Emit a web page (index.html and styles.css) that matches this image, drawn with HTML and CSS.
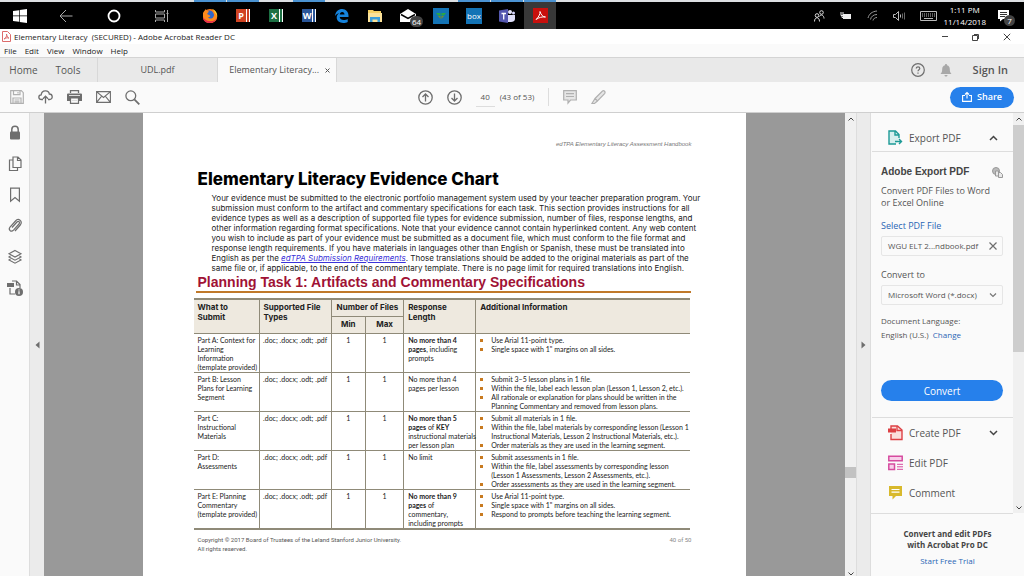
FILE: index.html
```html
<!DOCTYPE html>
<html lang="en">
<head>
<meta charset="utf-8">
<title>Elementary Literacy (SECURED) - Adobe Acrobat Reader DC</title>
<link rel="stylesheet" href="styles.css">
</head>
<body>
<header class="taskbar">
  <nav class="system" aria-label="System">
    <button class="sys start" aria-label="Start"><svg width="14" height="14" viewBox="0 0 14 14" fill="#fff"><path d="M0 2l6-.8v5.4H0zM6.700 1.100L14 0v6.600H6.700zM0 7.300h6v5.400L0 12zM6.700 7.300H14V14l-7.300-1.100z"/></svg></button>
    <button class="sys" aria-label="Back"><svg width="14" height="14" viewBox="0 0 14 14" fill="none" stroke="#aaa"><path d="M13.500 7H1M7 1L1 7l6 6"/></svg></button>
    <button class="sys" aria-label="Cortana"><svg width="14" height="14" viewBox="0 0 14 14" fill="none" stroke="#fff" stroke-width="1.800"><circle cx="7" cy="7" r="5.500"/></svg></button>
    <button class="sys" aria-label="Task view"><svg width="14" height="14" viewBox="0 0 14 14" fill="none" stroke="#aaa"><path d="M.5 1v2h9V1M.5 13v-2h9v2M.5 5h9v4h-9zM12.500 1v12M11.500 4.500h2"/></svg></button>
  </nav>
  <nav class="apps" aria-label="Applications">
    <button class="app open" aria-label="Firefox"><svg width="16" height="16" viewBox="0 0 16 16"><circle cx="8" cy="8" r="7" fill="#ff7a18"/><circle cx="7.500" cy="7" r="4.500" fill="#3267c8"/><path d="M1 5c1-2 2-3 3-4 0 1 1 2 3 2.500L5 6l3 1.500c1 1-1 2-2 1.500 1 2 4 2 5.500 0 1.500-2 0-5-1.500-6 3 .5 5 3 5 6 0 3.500-3 6-7 6S1 12 1 9z" fill="#ff8a1c"/><path d="M10 1c4 1 6 5 5 9 0-3-1-4-2-5-.5-2-2-3-3-4z" fill="#ffd52e"/><path d="M1 9c0 4 3 6 7 6 3 0 6-2 7-5-2 3-5 3.500-8 3C4 12.500 2 11 1 9z" fill="#e72e4c"/></svg></button>
    <button class="app open" aria-label="PowerPoint"><span class="office ppt">P</span></button>
    <button class="app" aria-label="Excel"><span class="office xls">X</span></button>
    <button class="app open" aria-label="Word"><span class="office doc">W</span></button>
    <button class="app" aria-label="Edge"><svg width="14" height="14" viewBox="0 0 14 14"><path d="M0 7C.5 2.500 3.500 0 7.200 0 11 0 13.500 3 13.500 6.500V8H4.700c.2 2 1.800 3 4 3 1.500 0 3-.4 4-1v3c-1.200.7-2.800 1-4.500 1C4.500 14 1.700 12 1.700 8.600 1.700 6.500 3 4.800 4.500 4 2.700 4.300 1 5.500 0 7zm4.800-1.500h4.700C9.500 4 8.600 3 7.200 3S5 4 4.800 5.500z" fill="#1583dc"/></svg></button>
    <button class="app" aria-label="File Explorer"><svg width="16" height="14" viewBox="0 0 16 14"><path d="M1 1h5l1 1h7v11H1z" fill="#f5cf63"/><path d="M1 4h14v9H1z" fill="#fbe29a"/><path d="M3 13V8h10v5h-2.500v-2.500h-5V13z" fill="#3b9dd9"/></svg></button>
    <button class="app" aria-label="Mail"><svg width="18" height="14" viewBox="0 0 18 14"><path d="M1 5l8-5 8 5v8H1z" fill="#fff"/><path d="M2 5.500l7 4 7-4" fill="none" stroke="#000" stroke-width="1.500"/></svg><span class="badge mailcount">64</span></button>
    <button class="app" aria-label="Web app"><svg width="16" height="16" viewBox="0 0 16 16"><path d="M0 0h16v16H0z" fill="#1373b5"/><path d="M3 5h4.500v2.500H5zM13 5H8.500v2.500H11z" fill="#28a745"/><path d="M5 8h2.500v3zM11 8H8.500v3z" fill="#7a8b2d"/></svg></button>
    <button class="app open"><span class="box">box</span></button>
    <button class="app open" aria-label="Teams"><svg width="16" height="16" viewBox="0 0 16 16"><circle cx="11" cy="4" r="2" fill="#e9e9ff"/><circle cx="14.500" cy="5" r="1.500" fill="#d8d8ff"/><path d="M9 7h7v4c0 2-2 3-4 3H9z" fill="#e0e0fa"/><path d="M0 2.500L9 1v14l-9-1.500z" fill="#5558af"/><path d="M2.500 5.500h4.500M4.700 5.500v6" stroke="#fff" stroke-width="1.300"/></svg></button>
    <button class="app open current" aria-label="Acrobat Reader"><svg width="15" height="15" viewBox="0 0 15 15"><path d="M0 0h15v15H0z" fill="#c8100d"/><path d="M3 11.500C5 10 7.500 6 7 3.500 8 7 10 9 12.500 9 9 8.500 6 9.500 3 11.500z" fill="none" stroke="#fff"/></svg></button>
  </nav>
  <div class="tray">
    <svg width="12" height="12" viewBox="0 0 12 12" fill="none" stroke="#ddd"><circle cx="4" cy="5.500" r="1.800"/><circle cx="8.500" cy="2.500" r="1.800"/><path d="M1.500 11.500c0-5 5-5 5 0M6.500 6.500c1.500-3 4.500-1 4.500 2"/></svg>
    <svg width="12" height="8" viewBox="0 0 12 8"><path d="M3 2h8v5H3z" fill="#eee"/><path d="M1 0v3.500h2V0M2 3.500v2h2" fill="none" stroke="#eee"/></svg>
    <svg width="11" height="11" viewBox="0 0 11 11" fill="none" stroke="#999"><path d="M1 8C2 4 5 1.500 10 1M3.500 9.500c.5-3 3-5 6.500-5M6 10.500c.5-2 2-3 4-3"/></svg>
    <svg width="12" height="10" viewBox="0 0 12 10" fill="none" stroke="#bbb"><path d="M.5 3.500h2l3-3v9l-3-3h-2zM7.500 3.500v3"/><path d="M9.500 2.500v5M11.500 1.500v7" stroke="#666"/></svg>
    <svg width="17" height="10" viewBox="0 0 17 10" fill="none" stroke="#bbb"><path d="M.5.5h16v9H.5z"/><path d="M2 3h13M2 5h13" stroke-dasharray="1 1"/><path d="M4 7.500h9"/></svg>
    <time class="clock">1:11 PM<br>11/14/2018</time>
    <div class="notif"><svg width="12" height="12" viewBox="0 0 12 12"><path d="M0 0h11v9H5l-3 2.500V9H0z" fill="#fff"/><path d="M2 2.500h7M2 4.500h7M2 6.500h5" stroke="#333"/></svg><span class="badge">7</span></div>
  </div>
</header>

<div class="titlebar">
  <svg width="9" height="11" viewBox="0 0 9 11" fill="none" stroke="#dc6b6b"><path d="M.5.5h5l3 3v7h-8z"/><path d="M2 8c2-1 3-3 2.500-5C5 6 6 7 7 7 5 6.500 4 7 2 8z"/></svg>
  <h1 class="apptitle">Elementary Literacy&nbsp; (SECURED) - Adobe Acrobat Reader DC</h1>
  <div class="winbtns">
    <button aria-label="Minimize"><svg width="8" height="8" viewBox="0 0 8 8" stroke="#444"><path d="M1 3.500h6"/></svg></button>
    <button aria-label="Restore"><svg width="8" height="8" viewBox="0 0 8 8" fill="none" stroke="#444"><path d="M.5 2.500h5v5h-5zM2 1.500h4.500V6"/></svg></button>
    <button aria-label="Close window"><svg width="8" height="8" viewBox="0 0 8 8" stroke="#444"><path d="M.8.8l6.400 6.400M7.200.8L.8 7.200"/></svg></button>
  </div>
</div>
<nav class="menubar" aria-label="Menu"><button>File</button><button>Edit</button><button>View</button><button>Window</button><button>Help</button></nav>

<div class="tabs">
  <button class="view home">Home</button><button class="view">Tools</button>
  <button class="tab">UDL.pdf</button>
  <div class="tab active"><span>Elementary Literacy...</span><button aria-label="Close tab"><svg width="5" height="5" viewBox="0 0 5 5" stroke="#555"><path d="M.5.5l4 4M4.500.5l-4 4"/></svg></button></div>
  <div class="account">
    <button aria-label="Help"><svg width="14" height="14" viewBox="0 0 14 14" fill="none" stroke="#6e6e6e"><circle cx="7" cy="7" r="6.300" stroke-width="1.200"/><path d="M5.300 5.600c0-2.300 3.500-2.200 3.500 0C8.800 6.800 7 6.800 7 8.300M7 9.500v1.200" stroke-width="1.200"/></svg></button>
    <button aria-label="Notifications"><svg width="12" height="13" viewBox="0 0 12 13" fill="#a8a8a8"><path d="M6 0c.8 0 1 .6 1 1.200 2 .5 2.800 2 2.800 4 0 2.500.5 3.500 1.700 4.800H.5c1.200-1.300 1.700-2.300 1.700-4.800 0-2 .8-3.500 2.800-4C5 .6 5.200 0 6 0zM4.500 11h3c0 2-3 2-3 0z"/></svg></button>
    <button class="signin">Sign In</button>
  </div>
</div>

<div class="toolbar">
  <div class="tools">
    <button aria-label="Save"><svg width="14" height="14" viewBox="0 0 14 14" fill="none" stroke="#b0b0b0" stroke-width="1.200"><path d="M.7.700h10.600l2 2v10.600H.7zM3.500.7v4h6.500v-4M3 13.300V8h8v5.300M4.500 10h5M4.500 11.800h5M8 2v1.500"/></svg></button>
    <button aria-label="Upload"><svg width="15" height="14" viewBox="0 0 15 14" fill="none" stroke="#6e6e6e" stroke-width="1.300"><path d="M5 9.500H3.500C0 9.500 0 5 3.200 4.800 3.700-.3 10.800-.3 11.300 4 15 4 15.300 9.500 11.500 9.500H10M7.500 13.500v-7M5 8.700l2.500-2.500L10 8.700"/></svg></button>
    <button aria-label="Print"><svg width="15" height="14" viewBox="0 0 15 14"><path d="M3.500 3V.7h8V3" fill="none" stroke="#6e6e6e" stroke-width="1.300"/><path d="M1 3.500h13a1 1 0 0 1 1 1V11H0V4.500a1 1 0 0 1 1-1z" fill="#6e6e6e"/><path d="M3.500 8h8v5.300h-8z" fill="#fafafa" stroke="#6e6e6e" stroke-width="1.200"/><path d="M2 5.500h11M5 10.500h5" stroke="#ddd"/></svg></button>
    <button aria-label="Email"><svg width="15" height="12" viewBox="0 0 15 12" fill="none" stroke="#6e6e6e" stroke-width="1.100"><path d="M.6.6h13.800v10.800H.6zM.8.8l6.700 5.700L14.200.8M.8 11.200l4.900-6M14.200 11.200l-4.900-6"/></svg></button>
    <button aria-label="Find"><svg width="15" height="15" viewBox="0 0 15 15" fill="none" stroke="#6e6e6e" stroke-width="1.300"><circle cx="5.800" cy="5.800" r="4.900"/><path d="M9.300 9.300l5 5" stroke-width="1.800"/></svg></button>
  </div>
  <div class="paging">
    <button aria-label="Previous page"><svg width="15" height="15" viewBox="0 0 15 15" fill="none" stroke="#6e6e6e" stroke-width="1.300"><circle cx="7.500" cy="7.500" r="6.700"/><path d="M7.500 11.500V4M4.500 7l3-3 3 3"/></svg></button>
    <button aria-label="Next page"><svg width="15" height="15" viewBox="0 0 15 15" fill="none" stroke="#6e6e6e" stroke-width="1.300"><circle cx="7.500" cy="7.500" r="6.700"/><path d="M7.500 3.500V11M4.500 8l3 3 3-3"/></svg></button>
    <input class="pageno" value="40" aria-label="Page number"><span class="pagecount">(43 of 53)</span>
    <span class="rule"></span>
    <button aria-label="Add comment"><svg width="14" height="14" viewBox="0 0 14 14" fill="#e6e6e6" stroke="#b0b0b0" stroke-width="1.200"><path d="M.7.7h12.600v9.300H7.500L5 13V10H.7z"/><path d="M3 3.700h8M3 6.500h8"/></svg></button>
    <button aria-label="Highlight"><svg width="15" height="15" viewBox="0 0 15 15" fill="#e6e6e6" stroke="#b0b0b0" stroke-width="1.200"><path d="M4 8.500L11.500 1c1.500-1 3.300.8 2.300 2.300L6.500 11zM4 8.500L1 13.500h2.500L6.500 11"/></svg></button>
  </div>
  <button class="share"><svg width="10" height="10" viewBox="0 0 10 10" fill="none" stroke="#fff" stroke-width="1.100"><path d="M3 3.500H.6v5.900h8.800V3.500H7M5 6.500v-6M3 2.500l2-2 2 2"/></svg>Share</button>
</div>

<main class="workspace">
  <nav class="rail" aria-label="Navigation panes">
    <button aria-label="Security"><svg width="14" height="16" viewBox="0 0 14 16"><path d="M3.800 7V4.500C3.800.2 10.200.2 10.200 4.500V7" fill="none" stroke="#6e6e6e" stroke-width="1.500"/><rect x="2" y="6.500" width="10" height="8" rx="1" fill="#6e6e6e"/></svg></button>
    <button aria-label="Pages"><svg width="14" height="16" viewBox="0 0 14 16" fill="none" stroke="#6e6e6e" stroke-width="1.200"><path d="M5 1h5l3 3v7.500H5zM9.500 1v3.500H13M5 4H1.500v10.500h8v-3"/></svg></button>
    <button aria-label="Bookmarks"><svg width="14" height="16" viewBox="0 0 14 16" fill="none" stroke="#6e6e6e" stroke-width="1.200"><path d="M2.600 1.200h8.800v13L7 10.500l-4.400 3.700z"/></svg></button>
    <button aria-label="Attachments"><svg width="14" height="16" viewBox="0 0 14 16" fill="none" stroke="#6e6e6e" stroke-width="1.200"><path d="M4 9.500L9 4c1.500-1.500 3.500.3 2 2l-5.500 6.200c-2.500 2.500-5.500-.5-3.500-3L7.500 3c3-3.500 7.500.3 4.800 4L7 13"/></svg></button>
    <button aria-label="Layers"><svg width="14" height="16" viewBox="0 0 14 16" fill="none" stroke="#6e6e6e" stroke-width="1.100"><path d="M7 1.500l6 3.300-6 3.300-6-3.300zM2.500 7L1 7.900l6 3.300 6-3.300L11.500 7M2.500 10L1 10.900l6 3.300 6-3.300-1.500-.9"/></svg></button>
    <button aria-label="Document info"><svg width="16" height="16" viewBox="0 0 16 16"><path d="M5 1h4.500L13 4.500V8M3 8v6h5M9.500 1v4H13" fill="none" stroke="#6e6e6e" stroke-width="1.200"/><path d="M0 3h7v4H0z" fill="#6e6e6e"/><circle cx="12" cy="12" r="4" fill="#6e6e6e"/><path d="M12 9.500v1M12 11.300v3" stroke="#fff" stroke-width="1.200"/></svg></button>
  </nav>
  <div class="gutter"><button aria-label="Collapse left pane"><svg width="5" height="8" viewBox="0 0 5 8" fill="#6e6e6e"><path d="M4.500.5v7L.5 4z"/></svg></button></div>

  <section class="canvas">
    <article class="page">
      <p class="running">edTPA Elementary Literacy Assessment Handbook</p>
      <h2 class="chart">Elementary Literacy Evidence Chart</h2>
      <p class="intro">Your evidence must be submitted to the electronic portfolio management system used by your teacher preparation program. Your<br>submission must conform to the artifact and commentary specifications for each task. This section provides instructions for all<br>evidence types as well as a description of supported file types for evidence submission, number of files, response lengths, and<br>other information regarding format specifications. Note that your evidence cannot contain hyperlinked content. Any web content<br>you wish to include as part of your evidence must be submitted as a document file, which must conform to the file format and<br>response length requirements. If you have materials in languages other than English or Spanish, these must be translated into<br>English as per the <a href="#">edTPA Submission Requirements</a>. Those translations should be added to the original materials as part of the<br>same file or, if applicable, to the end of the commentary template. There is no page limit for required translations into English.</p>
      <h3 class="task">Planning Task 1: Artifacts and Commentary Specifications</h3>
      <table class="spec">
        <colgroup><col class="c1"><col class="c2"><col class="c3"><col class="c4"><col class="c5"><col class="c6"></colgroup>
        <thead>
          <tr><th rowspan="2">What to<br>Submit</th><th rowspan="2">Supported File<br>Types</th><th colspan="2" class="num">Number of Files</th><th rowspan="2">Response<br>Length</th><th rowspan="2">Additional Information</th></tr>
          <tr><th class="num">Min</th><th class="num">Max</th></tr>
        </thead>
        <tbody>
          <tr><td>Part A: Context for<br>Learning<br>Information<br>(template provided)</td><td class="num">.doc; .docx; .odt; .pdf</td><td class="num">1</td><td class="num">1</td><td><b>No more than 4<br>pages</b>, including<br>prompts</td><td><ul><li>Use Arial 11-point type.</li><li>Single space with 1" margins on all sides.</li></ul></td></tr>
          <tr><td>Part B: Lesson<br>Plans for Learning<br>Segment</td><td class="num">.doc; .docx; .odt; .pdf</td><td class="num">1</td><td class="num">1</td><td>No more than 4<br>pages per lesson</td><td><ul><li>Submit 3–5 lesson plans in 1 file.</li><li>Within the file, label each lesson plan (Lesson 1, Lesson 2, etc.).</li><li>All rationale or explanation for plans should be written in the<br>Planning Commentary and removed from lesson plans.</li></ul></td></tr>
          <tr><td>Part C:<br>Instructional<br>Materials</td><td class="num">.doc; .docx; .odt; .pdf</td><td class="num">1</td><td class="num">1</td><td><b>No more than 5<br>pages</b> of <b>KEY</b><br>instructional materials<br>per lesson plan</td><td><ul><li>Submit all materials in 1 file.</li><li>Within the file, label materials by corresponding lesson (Lesson 1<br>Instructional Materials, Lesson 2 Instructional Materials, etc.).</li><li>Order materials as they are used in the learning segment.</li></ul></td></tr>
          <tr><td>Part D:<br>Assessments</td><td class="num">.doc; .docx; .odt; .pdf</td><td class="num">1</td><td class="num">1</td><td>No limit</td><td><ul><li>Submit assessments in 1 file.</li><li>Within the file, label assessments by corresponding lesson<br>(Lesson 1 Assessments, Lesson 2 Assessments, etc.).</li><li>Order assessments as they are used in the learning segment.</li></ul></td></tr>
          <tr><td>Part E: Planning<br>Commentary<br>(template provided)</td><td class="num">.doc; .docx; .odt; .pdf</td><td class="num">1</td><td class="num">1</td><td><b>No more than 9<br>pages</b> of<br>commentary,<br>including prompts</td><td><ul><li>Use Arial 11-point type.</li><li>Single space with 1" margins on all sides.</li><li>Respond to prompts before teaching the learning segment.</li></ul></td></tr>
        </tbody>
      </table>
      <footer class="pagefoot"><span>Copyright © 2017 Board of Trustees of the Leland Stanford Junior University.<br>All rights reserved.</span><span class="folio">40 of 50</span></footer>
    </article>
  </section>
  <div class="scroll docscroll" aria-hidden="true"><svg width="6" height="4" viewBox="0 0 6 4" fill="none" stroke="#444"><path d="M.5 3.500L3 1l2.500 2.500"/></svg><i class="before"></i><i class="thumb"></i><i class="after"></i><svg width="6" height="4" viewBox="0 0 6 4" fill="none" stroke="#444"><path d="M.5.5L3 3 5.500.5"/></svg></div>
  <div class="gutter right"><button aria-label="Collapse right pane"><svg width="5" height="8" viewBox="0 0 5 8" fill="#6e6e6e"><path d="M.5.5v7l4-3.500z"/></svg></button></div>

  <aside class="panel">
    <div class="panelmain">
      <div class="panelbody">
        <button class="toolrow export"><svg width="15" height="16" viewBox="0 0 15 16" fill="none" stroke="#1d9a96" stroke-width="1.400"><path d="M11 8V4.500L7.500 1H1v13h7M7 1v4h4" fill="#d6efee"/><path d="M7 11.500h6.500M11 9l2.500 2.500L11 14"/></svg><span>Export PDF</span><svg class="chev" width="9" height="6" viewBox="0 0 9 6" fill="none" stroke="#444" stroke-width="1.500"><path d="M1 5l3.500-3.500L8 5"/></svg></button>
        <form class="exportform">
          <div class="formhead"><h2>Adobe Export PDF</h2><svg width="11" height="11" viewBox="0 0 11 11" fill="#e8e8e8" stroke="#999"><circle cx="4" cy="4" r="3.500" fill="#bbb"/><path d="M3.500 4h3v5h-3zM6.500 5.500h2l2 2v3h-4z"/></svg></div>
          <p class="desc">Convert PDF Files to Word<br>or Excel Online</p>
          <a class="selectfile" href="#">Select PDF File</a>
          <div class="file"><span>WGU ELT 2...ndbook.pdf</span><button type="button" aria-label="Remove file"><svg width="8" height="8" viewBox="0 0 8 8" stroke="#6e6e6e" stroke-width="1.200"><path d="M.5.5l7 7M7.500.5l-7 7"/></svg></button></div>
          <label for="format">Convert to</label>
          <div class="pick"><select id="format"><option>Microsoft Word (*.docx)</option></select><svg width="8" height="5" viewBox="0 0 8 5" fill="none" stroke="#777" stroke-width="1.200"><path d="M1 .5L4 3.500l3-3"/></svg></div>
          <p class="lang">Document Language:<br>English (U.S.)&nbsp; <a href="#">Change</a></p>
          <button type="button" class="convert">Convert</button>
        </form>
        <div class="more">
          <button class="toolrow"><svg width="15" height="16" viewBox="0 0 15 16"><path d="M3 5V1h6.500L14 5v9.500H3V9" fill="#fbdedc" stroke="#dd4044" stroke-width="1.400"/><path d="M9 1v4.500h5" fill="none" stroke="#dd4044" stroke-width="1.300"/><path d="M0 3.500h8v4H0z" fill="#dd4044"/></svg><span>Create PDF</span><svg class="chev" width="9" height="6" viewBox="0 0 9 6" fill="none" stroke="#444" stroke-width="1.500"><path d="M1 1l3.500 3.500L8 1"/></svg></button>
          <button class="toolrow"><svg width="15" height="16" viewBox="0 0 15 16" fill="#f8d0ea" stroke="#d64b9f" stroke-width="1.500"><path d="M.8 1.300h13.400v4.500H.8zM.8 9h5.700v5.500H.8z"/><path d="M9 9.300h6M9 11.800h6M9 14.300h6" stroke-width="1"/></svg><span>Edit PDF</span></button>
          <button class="toolrow"><svg width="15" height="16" viewBox="0 0 15 16"><path d="M1 1h13v10H8l-3.500 3.500V11H1z" fill="#d8b92c"/><path d="M3.500 4.500h8M3.500 7.200h8" stroke="#fff" stroke-width="1.200"/></svg><span>Comment</span></button>
        </div>
      </div>
      <div class="scroll panelscroll" aria-hidden="true"><svg width="6" height="4" viewBox="0 0 6 4" fill="none" stroke="#444"><path d="M.5 3.500L3 1l2.500 2.500"/></svg><i class="thumb"></i><i class="after"></i><svg width="6" height="4" viewBox="0 0 6 4" fill="none" stroke="#444"><path d="M.5.5L3 3 5.500.5"/></svg></div>
    </div>
    <footer class="promo"><b>Convert and edit PDFs<br>with Acrobat Pro DC</b><a href="#">Start Free Trial</a></footer>
  </aside>
</main>
</body>
</html>
```
FILE: styles.css
```css
* { box-sizing: border-box; }
body {
  margin: 0;
  height: 100vh;
  display: flex;
  flex-direction: column;
  overflow: hidden;
  background: #fafafa;
  color: #555;
  font: 9px/12px "Open Sans", "Noto Sans", sans-serif;
}
button, input, select {
  margin: 0;
  padding: 0;
  border: 0;
  background: none;
  color: inherit;
  font: inherit;
}
button { display: flex; align-items: center; justify-content: center; }
svg { display: block; flex: none; overflow: visible; }
h1, h2, h3, p, ul { margin: 0; padding: 0; }
a { color: #2a66b5; text-decoration: none; }

/* Windows taskbar */
.taskbar {
  flex: none;
  height: 29px;
  display: flex;
  border-top: 2px solid #dcdfe2;
  background: #000;
  color: #fff;
}
.system { display: flex; gap: 4px; }
.sys { width: 44px; }
.sys.start { width: 40px; }
.apps { display: flex; gap: 1px; margin-left: 10px; }
.app { width: 32px; position: relative; }
.app.open { box-shadow: 0 -2px #4b93d2; }
.app.current { background: #383838; }
.office {
  width: 14px;
  height: 13px;
  border-right: 4px double #fff;
  font: bold 9px/13px "Open Sans", sans-serif;
}
.ppt { background: #d04423; }
.xls { background: #1d7044; }
.doc { background: #2a5699; }
.box { width: 16px; height: 16px; background: #1373b5; font-size: 8px; line-height: 15px; }
.badge {
  position: absolute;
  right: -5px;
  bottom: -4px;
  min-width: 11px;
  height: 11px;
  border-radius: 6px;
  background: #444;
  color: #fff;
  font-size: 8px;
  line-height: 11px;
  text-align: center;
}
.mailcount { right: 1px; bottom: 2px; min-width: 13px; }
.tray { margin-left: auto; padding-right: 14px; display: flex; align-items: center; gap: 15px; }
.clock { margin-left: -8px; font-size: 8px; line-height: 12px; text-align: center; }
.notif { position: relative; margin-left: -3px; }

/* Window chrome */
.titlebar { flex: none; height: 15px; padding-left: 2px; display: flex; align-items: center; gap: 3px; background: #fff; }
.apptitle { color: #222; font-size: 8px; line-height: 14px; font-weight: 400; }
.winbtns { margin-left: auto; padding-right: 13px; display: flex; gap: 23px; }
.menubar { flex: none; height: 13px; padding-left: 4px; display: flex; gap: 8px; color: #222; font-size: 8px; }
.tabs { flex: none; height: 25px; display: flex; border-top: 1px solid #d4d4d4; background: #e9e9e9; font-size: 9px; }
.view { width: 50px; padding-right: 8px; font-size: 10px; }
.view.home { width: 47px; padding-right: 0; }
.tab { width: 120px; border-left: 1px solid #d8d8d8; display: flex; align-items: center; justify-content: center; gap: 6px; }
.tab.active { justify-content: flex-end; padding-right: 6px; background: #fafafa; border-right: 1px solid #d8d8d8; }
.account { margin-left: auto; padding-right: 16px; display: flex; align-items: center; gap: 15px; }
.signin { margin-left: 6px; font-size: 11px; font-weight: 600; }

/* Toolbar */
.toolbar { flex: none; height: 31px; padding: 0 10px; display: grid; grid-template-columns: 1fr auto 1fr; align-items: center; border-bottom: 1px solid #cfcfcf; }
.tools { display: flex; gap: 14px; }
.paging { display: flex; align-items: center; gap: 14px; }
.pageno { width: 19px; height: 20px; border-bottom: 1px solid #ddd; text-align: center; font-size: 8px; }
.pagecount { margin-left: -9px; font-size: 8px; }
.rule { width: 1px; height: 18px; background: #ddd; }
.share { justify-self: end; width: 64px; height: 21px; border-radius: 11px; gap: 5px; background: #2680eb; color: #fff; font-size: 9px; font-weight: 600; }

/* Workspace */
.workspace { flex: 1; min-height: 0; display: flex; }
.rail { width: 29px; padding-top: 12px; display: flex; flex-direction: column; align-items: center; gap: 15px; }
.gutter { width: 15px; display: flex; align-items: center; justify-content: center; background: #ebebeb; border-left: 1px solid #ddd; }
.canvas { flex: 1; min-width: 0; display: flex; justify-content: center; background: #999; }
.scroll { flex: none; width: 11px; padding: 4px 0 0; display: flex; flex-direction: column; align-items: center; background: #f0f0f0; }
.scroll .thumb { width: 100%; background: #cdcdcd; }
.docscroll .before { flex: 346; }
.docscroll .thumb { flex: 0 0 11px; background: #c2c2c2; }
.docscroll .after { flex: 94; }
.right { width: 15px; border-right: 1px solid #ddd; }

/* Document page */
.page { width: 75.400%; padding: 26px 55px 0; background: #fff; color: #222; font: 8px/10px "Liberation Sans", sans-serif; white-space: nowrap; }
.running { color: #777; font-size: 6px; font-style: italic; text-align: right; }
.chart { margin-top: 20px; color: #000; font: 800 17px/20px Inter, "Liberation Sans", sans-serif; }
.intro { margin-top: 4px; padding-left: 14px; font-family: Inter, "Liberation Sans", sans-serif; }
.intro a { color: #3a32d8; font-style: italic; text-decoration: underline; }
.task { margin: 1px 0 5px -2px; padding-left: 2px; border-bottom: 2px solid #c0792a; color: #a01235; font-size: 14px; line-height: 17px; }
.spec { width: calc(100% + 3px); margin-left: -4px; border-collapse: collapse; table-layout: fixed; border-top: 2px solid #8f8a78; border-bottom: 2px solid #8f8a78; font: 7px/9px Lato, "Liberation Sans", sans-serif; }
.c1 { width: 13.200%; }
.c2 { width: 14.500%; }
.c3 { width: 6.900%; }
.c4 { width: 7.700%; }
.c5 { width: 14.500%; }
.spec th, .spec td { padding: 2px 0 0 4px; border: 1px solid #8f8a78; text-align: left; vertical-align: top; }
.spec tr > :first-child:not(.num) { border-left: 0; }
.spec tr > :last-child:not(.num) { border-right: 0; }
.spec th { height: 17px; background: #eee9df; font: bold 8px/10px Inter, "Liberation Sans", sans-serif; }
.spec .num { padding-left: 0; text-align: center; }
.spec ul { list-style: none; }
.spec li { position: relative; padding-left: 11px; }
.spec li::before { content: ""; position: absolute; left: 0; top: 3px; width: 3px; height: 3px; background: #c87a20; }
.pagefoot { margin-top: 5px; display: flex; justify-content: space-between; color: #555; font: 6px/9px Roboto, "Liberation Sans", sans-serif; }
.folio { color: #888; }

/* Tools panel */
.panel { flex: none; width: 153px; display: flex; flex-direction: column; }
.panelmain { display: flex; height: 401px; flex: 0 1 auto; }
.panelbody { flex: 1; min-width: 0; padding-left: 1px; border-bottom: 1px solid #ddd; }
.toolrow { width: 100%; height: 30px; padding: 0 15px 0 16px; justify-content: flex-start; gap: 6px; font-size: 10px; }
.toolrow .chev { margin-left: auto; }
.toolrow.export { height: 39px; padding-top: 11px; border-bottom: 1px solid #ddd; }
.exportform { padding: 13px 10px 16px 9px; display: flex; flex-direction: column; align-items: stretch; }
.formhead { display: flex; justify-content: space-between; align-items: center; }
.formhead h2 { color: #444; font: bold 10px/14px "Liberation Sans", sans-serif; }
.desc { margin-top: 6px; }
.selectfile { margin-top: 11px; }
.file, .pick { height: 20px; margin-top: 4px; padding: 0 5px 0 6px; display: flex; align-items: center; justify-content: space-between; border: 1px solid #e6e6e6; border-radius: 2px; font-size: 8px; }
.exportform label { margin-top: 13px; }
.pick select { flex: 1; min-width: 0; appearance: none; }
.lang { margin-top: 9px; line-height: 14px; font-size: 8px; }
.convert { margin-top: 38px; height: 21px; border-radius: 11px; background: #2680eb; color: #fff; font-size: 10px; }
.more { border-top: 1px solid #ddd; }
.panelscroll { height: 400px; padding-bottom: 3px; }
.panelscroll .thumb { flex: 227; margin-top: 4px; }
.panelscroll .after { flex: 154; }
.promo { padding-top: 14px; display: flex; flex-direction: column; align-items: center; text-align: center; font-size: 8px; line-height: 11px; }
.promo b { color: #444; }
.promo a { margin-top: 5px; }
```
